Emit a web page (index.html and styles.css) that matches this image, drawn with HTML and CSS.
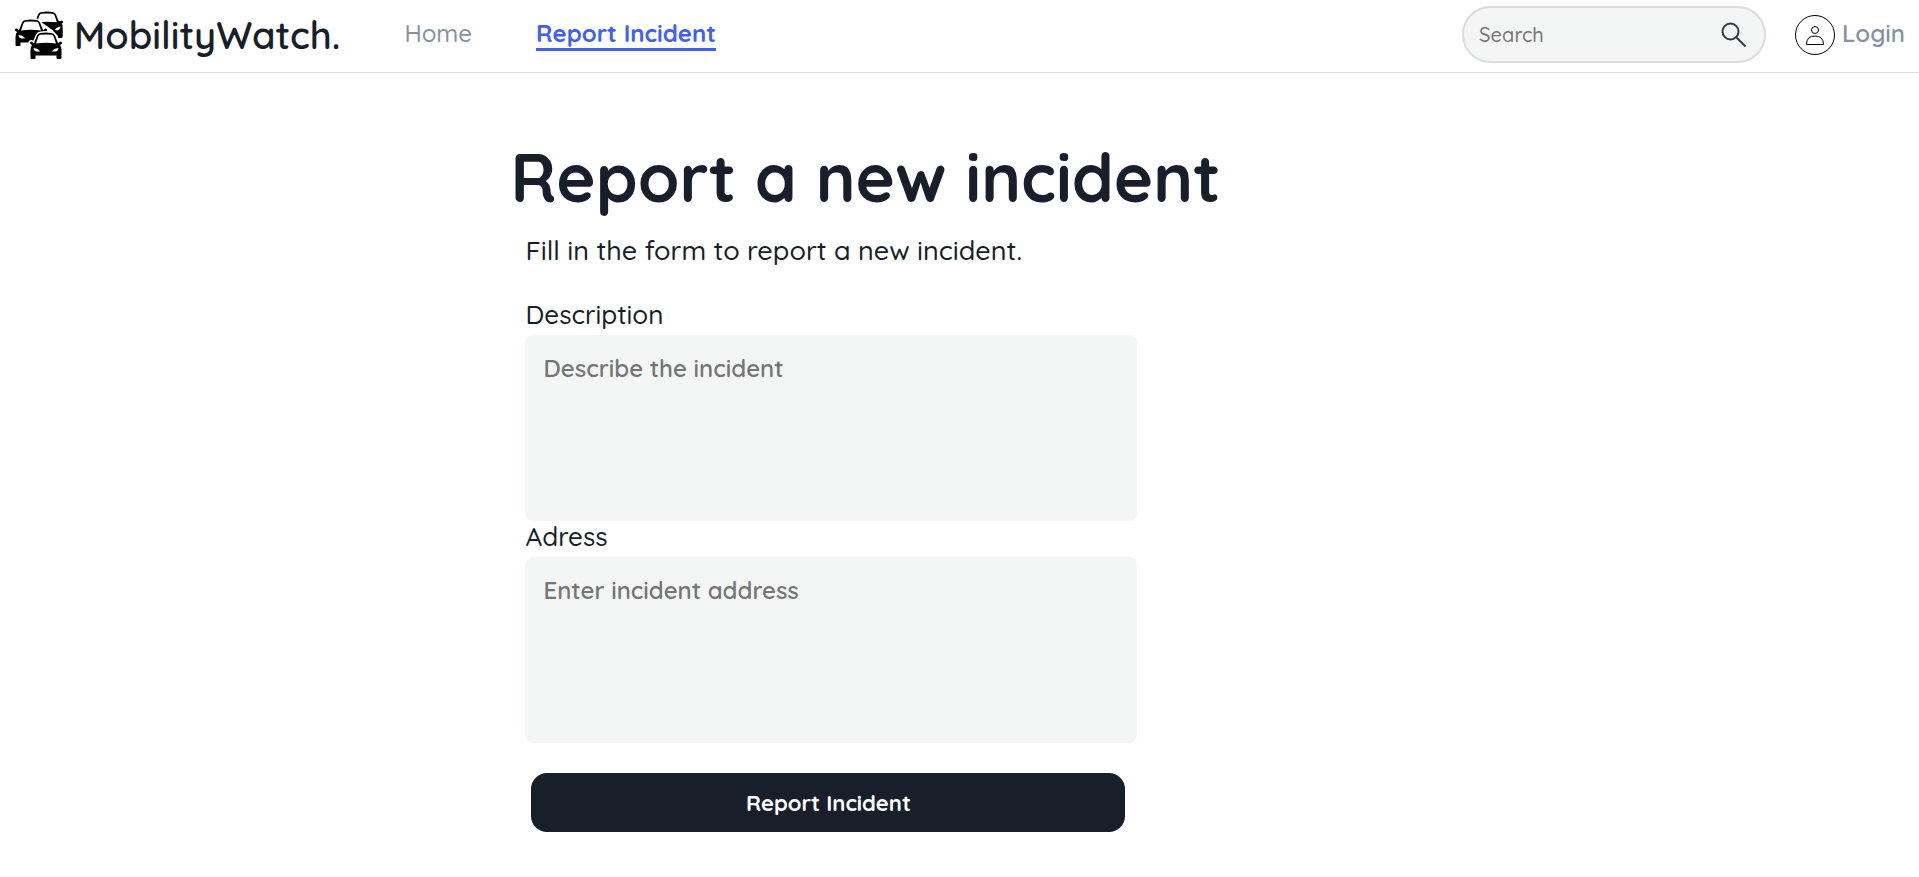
FILE: index.html
```html
<!DOCTYPE html>
<html lang="en">
<head>
<meta charset="utf-8">
<meta name="viewport" content="width=device-width, initial-scale=1">
<title>MobilityWatch - Report Incident</title>
<link rel="stylesheet" href="styles.css">
</head>
<body>
<header class="header">
  <a class="brand" href="#">
    <svg class="brand-icon" viewBox="0 0 50 50" aria-hidden="true">
      <defs>
        <g id="car">
          <path d="M5 11 L8 3.500 Q9 1.200 11.500 .9 Q17 .2 22.500 .9 Q25 1.200 26 3.500 L29 11 L31.500 9.500 Q33.500 9.500 33 11.500 L31 13 Q32.500 15 32.500 18 V26 Q32.500 27 31.500 27 H28.500 Q27.500 27 27.500 26 V23.500 H6.500 V26 Q6.500 27 5.500 27 H2.500 Q1.500 27 1.500 26 V18 Q1.500 15 3 13 L1 11.500 Q.5 9.500 2.500 9.500 Z"/>
          <path class="glass" d="M7 11.500 Q17 10 27 11.500 L24.500 4.300 Q24 3 22.500 2.800 Q17 2.200 11.500 2.800 Q10 3 9.500 4.300 Z M4.500 16 Q5 19.500 8 19.500 H11 Q10 16.500 4.500 16 Z M29.500 16 Q29 19.500 26 19.500 H23 Q24 16.500 29.500 16 Z"/>
        </g>
      </defs>
      <use href="#car" x="16" y="1"/>
      <path fill="#fff" d="M14 9 H23 L44 24 V29 H14 Z"/>
      <path d="M33 12 Q40 14 46 11 L48.500 15 V26 H44 L40 22 Q39 19 36 18 Z"/>
      <path fill="#fff" d="M41 20 Q42 17 46.500 16.500 Q46 20 43 20.500 Z"/>
      <use class="halo" href="#car" x="0" y="9"/>
      <use href="#car" x="0" y="9"/>
      <use class="halo" href="#car" x="15" y="22"/>
      <use href="#car" x="15" y="22"/>
    </svg>
    <span>MobilityWatch.</span>
  </a>
  <nav class="nav">
    <a class="nav-link" href="#">Home</a>
    <a class="nav-link active" href="#" aria-current="page">Report Incident</a>
  </nav>
  <form class="search" role="search">
    <input class="search-input" type="search" placeholder="Search" aria-label="Search">
    <button class="search-button" type="button" aria-label="Search">
      <svg viewBox="0 0 26 26" aria-hidden="true"><circle cx="9.500" cy="9.500" r="8"/><path d="M15.500 15.500 L24.500 24.500"/></svg>
    </button>
  </form>
  <a class="login" href="#">
    <svg viewBox="0 0 42 42" aria-hidden="true"><circle cx="21" cy="21" r="19.500"/><circle cx="21" cy="16" r="3.500"/><path d="M12.500 30.500 Q12.500 22 21 22 Q29.500 22 29.500 30.500 Z"/></svg>
    <span class="login-text">Login</span>
  </a>
</header>
<main class="main">
  <h1 class="title">Report a new incident</h1>
  <form class="form">
    <p class="intro">Fill in the form to report a new incident.</p>
    <label class="label" for="description">Description</label>
    <textarea class="field" id="description" placeholder="Describe the incident"></textarea>
    <label class="label" for="address">Adress</label>
    <textarea class="field" id="address" placeholder="Enter incident address"></textarea>
    <button class="submit" type="button">Report Incident</button>
  </form>
</main>
</body>
</html>
```

FILE: styles.css
```css
* {
  box-sizing: border-box;
}

body {
  margin: 0;
  background: #fff;
  color: #181f2a;
  font-family: Quicksand, Inter, sans-serif;
}

a {
  color: inherit;
  text-decoration: none;
}

button,
input,
textarea {
  font: inherit;
}

.header {
  display: flex;
  align-items: center;
  padding: 6px 14px 9px;
  border-bottom: 1px solid #dcdcdc;
}

.brand {
  display: flex;
  align-items: center;
  gap: 10px;
  font-size: 38px;
  font-weight: 600;
  line-height: 48px;
}

.brand-icon {
  width: 50px;
  height: 50px;
}

.halo {
  stroke: #fff;
  stroke-width: 3px;
}

.glass {
  fill: #fff;
  stroke: none;
}

.nav {
  display: flex;
  gap: 64px;
  margin-left: 64px;
  font-size: 24px;
  line-height: 29px;
}

.nav-link {
  border-bottom: 3px solid transparent;
  color: #84939f;
  font-weight: 500;
}

.nav-link.active {
  border-color: #435ff0;
  color: #435ff0;
  font-weight: 700;
}

.search {
  display: flex;
  align-items: center;
  width: 304px;
  height: 57px;
  margin-left: auto;
  padding: 0 17px 0 15px;
  border: 2px solid #dcdcdc;
  border-radius: 29px;
  background: #f4f6f5;
}

.search-input {
  flex: 1;
  min-width: 0;
  padding: 0;
  border: 0;
  outline: 0;
  background: transparent;
  font-size: 20px;
  font-weight: 500;
}

.search-input::placeholder,
.field::placeholder {
  color: #757575;
}

.search-button {
  display: flex;
  padding: 0;
  border: 0;
  background: transparent;
}

.search-button svg {
  width: 26px;
  height: 26px;
  fill: none;
  stroke: #343847;
  stroke-width: 2px;
}

.login {
  display: flex;
  align-items: center;
  gap: 6px;
  margin-left: 28px;
  color: #84939f;
  font-size: 24px;
  font-weight: 600;
  line-height: 28px;
}

.login svg {
  width: 42px;
  height: 42px;
  fill: none;
  stroke: #000;
}

.login-text {
  padding-bottom: 3px;
}

.main {
  max-width: 1250px;
  margin-left: 26.6%;
  padding: 64px 0 40px;
}

.title {
  margin: 0;
  font-size: 67px;
  font-weight: 700;
  line-height: 80px;
}

.form {
  display: flex;
  flex-direction: column;
  max-width: 627px;
  padding-left: 15px;
}

.intro {
  margin: 15px 0 31px;
  font-size: 27px;
  font-weight: 500;
  line-height: 36px;
  white-space: nowrap;
}

.label {
  padding-bottom: 4px;
  font-size: 26px;
  font-weight: 500;
  line-height: 32px;
}

.field {
  height: 186px;
  padding: 17px 18px;
  border: 0;
  border-radius: 8px;
  background: #f4f6f5;
  font-size: 24px;
  font-weight: 600;
  line-height: 32px;
  resize: none;
}

.submit {
  margin: 30px 12px 0 6px;
  padding: 15px 14px 13px;
  border: 0;
  border-radius: 16px;
  background: #181f2a;
  color: #fff;
  font-size: 22px;
  font-weight: 700;
  line-height: 31px;
}
```
